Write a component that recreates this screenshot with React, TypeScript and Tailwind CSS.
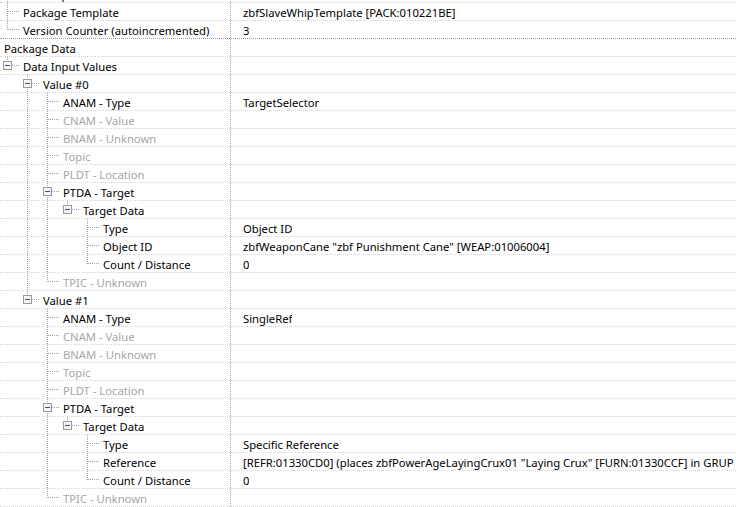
import React from "react";

interface Row {
  label: string;
  value?: string;
  level: number;
  expander?: boolean;
  gray?: boolean;
  strongBottom?: boolean;
}

const rows: Row[] = [
  { label: "Data Input Count", value: "2", level: 1 },
  { label: "Package Template", value: "zbfSlaveWhipTemplate [PACK:010221BE]", level: 1 },
  { label: "Version Counter (autoincremented)", value: "3", level: 1, strongBottom: true },
  { label: "Package Data", level: 0 },
  { label: "Data Input Values", level: 1, expander: true },
  { label: "Value #0", level: 2, expander: true },
  { label: "ANAM - Type", value: "TargetSelector", level: 3 },
  { label: "CNAM - Value", level: 3, gray: true },
  { label: "BNAM - Unknown", level: 3, gray: true },
  { label: "Topic", level: 3, gray: true },
  { label: "PLDT - Location", level: 3, gray: true },
  { label: "PTDA - Target", level: 3, expander: true },
  { label: "Target Data", level: 4, expander: true },
  { label: "Type", value: "Object ID", level: 5 },
  { label: "Object ID", value: 'zbfWeaponCane "zbf Punishment Cane" [WEAP:01006004]', level: 5 },
  { label: "Count / Distance", value: "0", level: 5 },
  { label: "TPIC - Unknown", level: 3, gray: true },
  { label: "Value #1", level: 2, expander: true },
  { label: "ANAM - Type", value: "SingleRef", level: 3 },
  { label: "CNAM - Value", level: 3, gray: true },
  { label: "BNAM - Unknown", level: 3, gray: true },
  { label: "Topic", level: 3, gray: true },
  { label: "PLDT - Location", level: 3, gray: true },
  { label: "PTDA - Target", level: 3, expander: true },
  { label: "Target Data", level: 4, expander: true },
  { label: "Type", value: "Specific Reference", level: 5 },
  {
    label: "Reference",
    value: '[REFR:01330CD0] (places zbfPowerAgeLayingCrux01 "Laying Crux" [FURN:01330CCF] in GRUP Cell Temporary Children of [CELL:00000000])',
    level: 5,
  },
  { label: "Count / Distance", value: "0", level: 5 },
  { label: "TPIC - Unknown", level: 3, gray: true },
];

// the first row sits above the visible area, so its sibling line starts at the top
const hasLaterSibling = (i: number, level: number) => {
  for (let j = i + 1; j < rows.length; j++) {
    if (rows[j].level < level) return false;
    if (rows[j].level === level) return true;
  }
  return false;
};

const lineX = (level: number) => 7 + 20 * (level - 1);
const DOT = "#a0a0a0";

const TreeGuides = ({ index }: { index: number }) => {
  const row = rows[index];
  const parts: React.ReactNode[] = [];

  for (let l = 1; l < row.level; l++) {
    if (hasLaterSibling(index, l)) {
      const x = lineX(l) + 0.5;
      parts.push(<line key={"v" + l} x1={x} y1={0} x2={x} y2={18} />);
    }
  }

  if (row.level >= 1) {
    const x = lineX(row.level) + 0.5;
    const bottom = hasLaterSibling(index, row.level) ? 18 : 9;
    parts.push(<line key="own" x1={x} y1={0} x2={x} y2={bottom} />);
    parts.push(<line key="h" x1={x} y1={8.5} x2={x + 12} y2={8.5} />);
  }

  return (
    <svg className="absolute left-0 top-0" width={230} height={18} shapeRendering="crispEdges">
      <g stroke={DOT} strokeWidth={1} strokeDasharray="1 1">
        {parts}
      </g>
      {row.expander && (
        <g>
          <rect
            x={lineX(row.level) - 4 + 0.5}
            y={4.5}
            width={8}
            height={8}
            fill="#f4f4f4"
            stroke="#9a9a9a"
          />
          <line
            x1={lineX(row.level) - 2}
            y1={8.5}
            x2={lineX(row.level) + 3}
            y2={8.5}
            stroke="#3b5a8c"
          />
        </g>
      )}
    </svg>
  );
};

const App = () => {
  return (
    <div
      className="w-[736px] h-[507px] overflow-hidden bg-white text-[11.25px] text-black"
      style={{ fontFamily: '"Noto Sans", "Open Sans", sans-serif' }}
    >
      <div className="-mt-[15px]">
        {rows.map((row, idx) => (
          <div
            key={idx}
            className={
              "flex h-[18px] border-b border-dotted " +
              (row.strongBottom ? "border-[#9c9c9c]" : "border-[#d6d6d6]")
            }
          >
            <div className="relative w-[231px] shrink-0 border-r border-dotted border-[#a0a0a0]">
              <TreeGuides index={idx} />
              <div
                className={
                  "absolute top-[1px] leading-[17px] whitespace-nowrap " +
                  (row.gray ? "text-[#a6a6a6]" : "text-black")
                }
                style={{ left: row.level === 0 ? 4 : lineX(row.level) + 16 }}
              >
                {row.label}
              </div>
            </div>
            <div className="pt-[1px] pl-[12px] leading-[17px] whitespace-nowrap overflow-hidden">
              {row.value}
            </div>
          </div>
        ))}
      </div>
    </div>
  );
};

export default App;
